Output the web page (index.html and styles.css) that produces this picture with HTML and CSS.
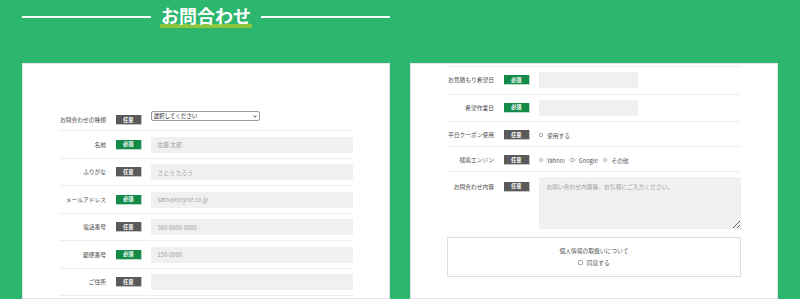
FILE: index.html
```html
<!DOCTYPE html>
<html lang="ja">
<head>
  <meta charset="UTF-8" />
  <meta name="viewport" content="width=device-width, initial-scale=1.0"/>
  <title>お問合わせ</title>
  <link rel="stylesheet" href="styles.css">
</head>
<body>
  <div class="page">
    <h1 class="title">
      <span class="title-line"></span>
      <span class="title-text">お問合わせ</span>
      <span class="title-line"></span>
    </h1>

    <section class="card card-left">
      <div class="form-list">
        <div class="form-row row-first">
          <div class="label">お問合わせの種類</div>
          <span class="badge">任意</span>
          <div class="field field-select">
            <div class="select-wrap">
              <select class="select"><option>選択してください</option></select>
              <svg class="select-arrow" viewBox="0 0 6 4" width="4" height="3"><path d="M0.8 0.8 L3 3 L5.2 0.8" fill="none" stroke="#222" stroke-width="1.2"/></svg>
            </div>
          </div>
        </div>
        <div class="form-row">
          <div class="label">名前</div>
          <span class="badge badge-req">必須</span>
          <div class="field"><input class="input" type="text" placeholder="佐藤 太郎" /></div>
        </div>
        <div class="form-row">
          <div class="label">ふりがな</div>
          <span class="badge">任意</span>
          <div class="field"><input class="input" type="text" placeholder="さとう たろう" /></div>
        </div>
        <div class="form-row">
          <div class="label">メールアドレス</div>
          <span class="badge badge-req">必須</span>
          <div class="field"><input class="input" type="text" placeholder="sato@recycle.co.jp" /></div>
        </div>
        <div class="form-row">
          <div class="label">電話番号</div>
          <span class="badge">任意</span>
          <div class="field"><input class="input" type="text" placeholder="080-0000-0000" /></div>
        </div>
        <div class="form-row">
          <div class="label">郵便番号</div>
          <span class="badge badge-req">必須</span>
          <div class="field"><input class="input" type="text" placeholder="150-0000" /></div>
        </div>
        <div class="form-row">
          <div class="label">ご住所</div>
          <span class="badge">任意</span>
          <div class="field"><input class="input" type="text" /></div>
        </div>
      </div>
    </section>

    <section class="card card-right">
      <div class="form-list list-top">
        <div class="form-row">
          <div class="label">お見積もり希望日</div>
          <span class="badge badge-req">必須</span>
          <div class="field"><input class="input input-short" type="text" /></div>
        </div>
        <div class="form-row">
          <div class="label">希望作業日</div>
          <span class="badge badge-req">必須</span>
          <div class="field"><input class="input input-short" type="text" /></div>
        </div>
        <div class="form-row row-check">
          <div class="label">平日クーポン使用</div>
          <span class="badge">任意</span>
          <div class="field field-options">
            <label class="option"><input type="checkbox" class="check" />使用する</label>
          </div>
        </div>
        <div class="form-row row-check">
          <div class="label">検索エンジン</div>
          <span class="badge">任意</span>
          <div class="field field-options">
            <label class="option"><input type="radio" name="engine" class="check radio" />Yahoo!</label>
            <label class="option"><input type="radio" name="engine" class="check radio" />Google</label>
            <label class="option"><input type="radio" name="engine" class="check radio" />その他</label>
          </div>
        </div>
        <div class="form-row row-text">
          <div class="label">お問合わせ内容</div>
          <span class="badge">任意</span>
          <div class="field"><textarea class="textarea" placeholder="お問い合わせ内容等、お気軽にご入力ください。"></textarea></div>
        </div>
      </div>

      <div class="privacy">
        <p>個人情報の取扱いについて</p>
        <label class="option"><input type="checkbox" class="check" />同意する</label>
      </div>
    </section>
  </div>
</body>
</html>
```

FILE: styles.css
```css
* {
  box-sizing: border-box;
}
body {
  margin: 0;
  background: #2cb66e;
  font-family: "Noto Sans CJK JP", "Noto Sans", sans-serif;
  color: #555;
  overflow: hidden;
}

.page {
  display: grid;
  grid-template-columns: 368px 368px;
  grid-template-rows: 63px 1fr;
  column-gap: 20px;
  padding: 0 22px;
  height: 299px;
}

/* title */
.title {
  grid-column: 1;
  grid-row: 1;
  margin: 0;
  padding-top: 2px;
  display: flex;
  align-items: flex-start;
  gap: 9px;
}
.title-line {
  flex: 1;
  height: 2px;
  margin-top: 13.5px;
  background: #fff;
}
.title-text {
  padding: 0 1px;
  font-size: 18px;
  line-height: 27px;
  font-weight: bold;
  color: #fff;
  background: linear-gradient(transparent 22px, #8cc63f 22px, #8cc63f 26px, transparent 26px);
}

/* cards */
.card {
  grid-row: 2;
  background: #fff;
  border: 1px solid #e4e4e4;
  padding: 0 36px;
}
.card-left {
  grid-column: 1;
  padding-top: 42px;
}
.card-right {
  grid-column: 2;
  padding-top: 2px;
}

.form-list.list-top {
  border-top: 1px solid #eee;
}
.form-row {
  display: flex;
  align-items: center;
  padding: 5.25px 0;
  border-bottom: 1px solid #eee;
}
.label {
  width: 47px;
  flex-shrink: 0;
  text-align: right;
  font-size: 5.75px;
  line-height: 10px;
  white-space: nowrap;
  color: #4a4a4a;
}
.badge {
  flex-shrink: 0;
  width: 25.5px;
  height: 10px;
  margin-left: 10px;
  display: flex;
  align-items: center;
  justify-content: center;
  background: #5a5a5a;
  border-right: 1px solid #c4c4c4;
  border-bottom: 1px solid #c4c4c4;
  color: #fff;
  font-size: 5.25px;
  font-weight: bold;
}
.badge-req {
  background: #138a48;
  border-color: #b8dcc6;
}
.field {
  flex: 1;
  margin-left: 9px;
  font-size: 5.75px;
  color: #555;
}

/* first row: select at top, label and badge at bottom */
.row-first {
  align-items: flex-end;
  padding-top: 5px;
}
.field-select {
  height: 14px;
}
.select-wrap {
  position: relative;
  width: 109px;
}
.select {
  appearance: none;
  display: block;
  width: 100%;
  height: 10px;
  padding: 0 2px;
  font-family: inherit;
  font-size: 5.5px;
  line-height: 8px;
  color: #111;
  background: #fff;
  border: 1px solid #9a9a9a;
  border-radius: 2px;
}
.select-arrow {
  position: absolute;
  right: 3px;
  top: 3.5px;
}

.input {
  display: block;
  width: 100%;
  height: 16px;
  padding: 0 7px;
  border: none;
  background: #f0f0f0;
  font-family: inherit;
  font-size: 5.75px;
  color: #555;
}
.input::placeholder,
.textarea::placeholder {
  color: #a0a0a0;
}
.input-short {
  width: 99px;
}

.row-check {
  padding: 6.25px 0 4.25px;
}
.field-options {
  height: 13.5px;
  display: flex;
  align-items: center;
}
.option {
  display: inline-flex;
  align-items: center;
  gap: 4px;
  margin-right: 5px;
  font-size: 5.75px;
  color: #555;
}
.check {
  appearance: none;
  margin: 0;
  width: 4.5px;
  height: 4.5px;
  border: 1px solid #aaa;
  border-radius: 1px;
  background: #fff;
}
.check.radio {
  border-radius: 50%;
}

.row-text {
  align-items: flex-start;
  border-bottom: none;
}
.row-text .label,
.row-text .badge {
  margin-top: 4.25px;
}
.textarea {
  display: block;
  width: 100%;
  height: 52px;
  padding: 5px 8px;
  border: none;
  background: #f0f0f0;
  font-family: inherit;
  font-size: 5.75px;
  color: #555;
}

.privacy {
  margin-top: 2px;
  height: 40px;
  border: 1px solid #ddd;
  display: flex;
  flex-direction: column;
  align-items: center;
  justify-content: center;
  font-size: 5.75px;
  line-height: 12px;
  color: #555;
}
.privacy p {
  margin: 0;
}
.privacy .option {
  margin-right: 0;
}
```
